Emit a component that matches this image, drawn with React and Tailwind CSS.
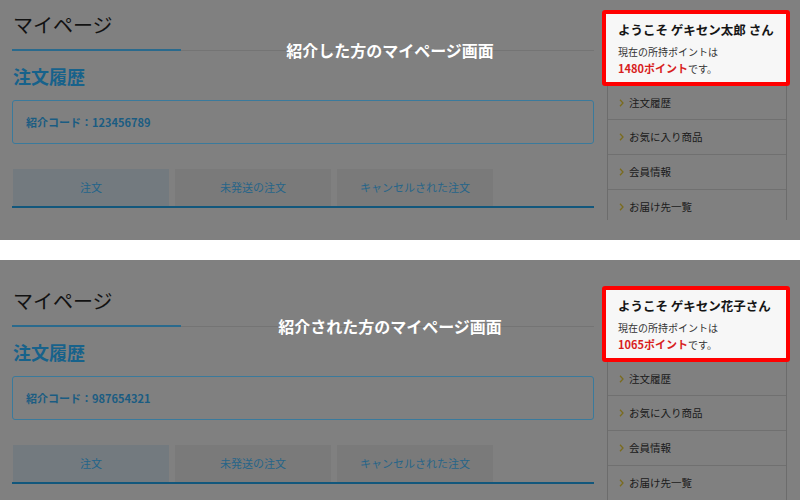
import React from "react";

function Chevron() {
  return (
    <svg width="5" height="8" viewBox="0 0 5 8" className="shrink-0">
      <polyline points="1,0.8 4,4 1,7.2" fill="none" stroke="#7a6b1e" strokeWidth="1.3" />
    </svg>
  );
}

function Shot({ title, name, points, code, clipClass, padClass }) {
  const menu = ["注文履歴", "お気に入り商品", "会員情報", "お届け先一覧"];
  return (
    <div className="h-[240px] bg-[#808080] overflow-hidden">
      <div className={`overflow-hidden ${clipClass} ${padClass}`}>
        <div className="relative flex pl-[12px] gap-[8px]">
          {/* main column */}
          <div className="w-[582px] flex flex-col">
            <div className="h-[49px] flex items-center pl-px text-[20px] leading-[20px] text-[#121212]">マイページ</div>
            <div className="h-[2px] flex items-end">
              <div className="w-[169px] h-[2px] bg-[#2a6a8d]" />
              <div className="flex-1 h-px bg-[#747474]" />
            </div>
            <div className="h-[49px] flex items-center pl-px text-[18px] leading-[20px] font-bold text-[#17628b]">注文履歴</div>
            <div className="h-[44px] border border-[#3a7a9c] rounded-[3px] flex items-center pl-[13px] text-[11px] leading-[14px] font-bold text-[#1a5c82]">
              紹介コード：{code}
            </div>
            <div className="mt-[25px] h-[37px] flex gap-[6px] pl-px">
              <div className="w-[156px] bg-[#737a7f] flex items-center justify-center text-[11px] text-[#23648a]">注文</div>
              <div className="w-[156px] bg-[#7a7a7a] flex items-center justify-center text-[11px] text-[#276589]">未発送の注文</div>
              <div className="w-[156px] bg-[#7a7a7a] flex items-center justify-center text-[11px] text-[#276589]">キャンセルされた注文</div>
            </div>
            <div className="h-[2px] bg-[#12577c]" />
          </div>

          {/* sidebar */}
          <div className="w-[188px] pt-[10px] flex flex-col">
            <div className="h-[76px] border-4 border-[#ff0000] rounded-[3px] bg-[#f7f7f7] pl-[12px] pt-[6px] relative z-10">
              <div className="text-[12.5px] leading-[20px] font-bold text-[#151515] whitespace-nowrap">{name}</div>
              <div className="mt-[4px] text-[10px] leading-[16px] text-[#333]">現在の所持ポイントは</div>
              <div className="text-[10px] leading-[16px] text-[#333]">
                <span className="text-[11px] font-bold text-[#d81e1e]">{points}ポイント</span>です。
              </div>
            </div>
            <div className="ml-[5px] w-[180px] border-x border-[#6c6c6c] flex flex-col">
              {menu.map((m, i) => (
                <div
                  key={m}
                  className={`${i === 0 ? "h-[34px]" : "h-[35px]"} border-b border-[#707070] flex items-center pl-[11px] gap-[5px] text-[10.5px] text-[#1a1a1a]`}
                >
                  <Chevron />
                  <span>{m}</span>
                </div>
              ))}
            </div>
          </div>

          {/* caption */}
          <div className="absolute left-[390px] top-[41px] -translate-x-1/2 text-white text-[16px] leading-[18px] font-bold whitespace-nowrap">
            {title}
          </div>
        </div>
      </div>
    </div>
  );
}

export default function App() {
  return (
    <div className="w-[800px] h-[500px] bg-white flex flex-col font-['Noto_Sans_CJK_JP','Noto_Sans',sans-serif]">
      <Shot
        title="紹介した方のマイページ画面"
        name="ようこそ ゲキセン太郎 さん"
        points="1480"
        code="123456789"
        clipClass="h-[220px]"
        padClass="pt-0"
      />
      <div className="h-[20px] bg-white" />
      <Shot
        title="紹介された方のマイページ画面"
        name="ようこそ ゲキセン花子さん"
        points="1065"
        code="987654321"
        clipClass="h-[240px]"
        padClass="pt-[16px]"
      />
    </div>
  );
}
